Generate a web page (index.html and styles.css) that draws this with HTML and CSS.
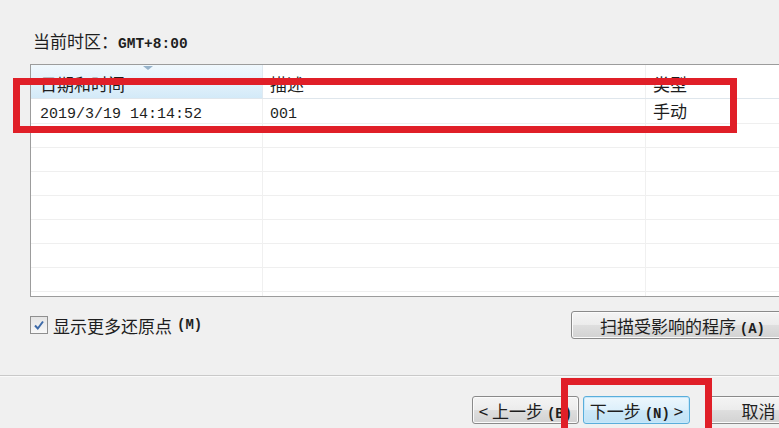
FILE: index.html
```html
<!DOCTYPE html>
<html lang="zh-CN">
<head>
    <meta charset="UTF-8">
    <meta name="viewport" content="width=device-width, initial-scale=1.0">
    <title>系统还原</title>
    <link rel="stylesheet" href="styles.css">
</head>
<body>
    <div class="dialog">
        <div class="content">
            <p class="tz">当前时区：<span class="mono-b">GMT+8:00</span></p>
            <div class="list">
                <div class="row head">
                    <div class="cell sorted"><span class="arrow"></span>日期和时间</div>
                    <div class="cell">描述</div>
                    <div class="cell">类型</div>
                </div>
                <div class="row">
                    <div class="cell first"><span class="mono">2019/3/19 14:14:52</span></div>
                    <div class="cell"><span class="mono">001</span></div>
                    <div class="cell">手动</div>
                </div>
                <div class="row"><div class="cell"></div><div class="cell"></div><div class="cell"></div></div>
                <div class="row"><div class="cell"></div><div class="cell"></div><div class="cell"></div></div>
                <div class="row"><div class="cell"></div><div class="cell"></div><div class="cell"></div></div>
                <div class="row"><div class="cell"></div><div class="cell"></div><div class="cell"></div></div>
                <div class="row"><div class="cell"></div><div class="cell"></div><div class="cell"></div></div>
                <div class="row"><div class="cell"></div><div class="cell"></div><div class="cell"></div></div>
                <div class="row"><div class="cell"></div><div class="cell"></div><div class="cell"></div></div>
                <div class="row"><div class="cell"></div><div class="cell"></div><div class="cell"></div></div>
            </div>
            <div class="check-row">
                <label class="check">
                    <span class="box">
                        <svg viewBox="0 0 12 12" width="12" height="12"><path d="M2 6.5 L4.8 9.5 L10 2.5" fill="none" stroke="#3d6aa8" stroke-width="2"/></svg>
                    </span>
                    显示更多还原点 <span class="key">(M)</span>
                </label>
                <button class="btn scan">扫描受影响的程序 <span class="key">(A)</span></button>
            </div>
        </div>
        <div class="sep"></div>
        <div class="buttons">
            <button class="btn">&lt; 上一步 <span class="key">(B)</span></button>
            <button class="btn default">下一步 <span class="key">(N)</span> &gt;</button>
            <button class="btn cancel">取消</button>
        </div>
    </div>

    <!-- red annotations -->
    <div class="mark mark-row"></div>
    <div class="mark mark-next"></div>
</body>
</html>
```

FILE: styles.css
```css
body{
    margin: 0;
    background-color: #f0f0f0;
    font-family: "Noto Sans CJK SC", "Noto Sans", sans-serif;
    font-size: 17px;
    color: #1e1e1e;
    overflow: hidden;
    height: 428px;
}
.dialog{
    width: 860px;
}
.content{
    padding: 0 30px;
}
.tz{
    margin: 0;
    padding: 31px 0 0 3px;
    height: 20px;
    line-height: 20px;
}
.mono{
    font-family: "Liberation Mono", monospace;
    font-size: 15px;
}
.mono-b{
    font-family: "Liberation Mono", monospace;
    font-size: 14.5px;
    font-weight: bold;
}
.key{
    font-family: "Liberation Mono", monospace;
    font-size: 14px;
    font-weight: bold;
}
.list{
    margin-top: 13px;
    height: 231px;
    overflow: hidden;
    background-color: #fff;
    border: 1px solid #9c9c9c;
}
.row{
    display: grid;
    grid-template-columns: 232px 383px 1fr;
    height: 24px;
    border-bottom: 1px solid #efefef;
    box-sizing: border-box;
}
.row.head{
    height: 34px;
    border-bottom: 1px solid #dfe6ec;
}
.row.head + .row{
    height: 25px;
}
.cell{
    border-right: 1px solid #f0f0f0;
    padding: 0 7px;
    height: 24px;
    line-height: 24px;
}
.cell:last-child{
    border-right: none;
}
.head .cell{
    height: auto;
    padding-top: 8px;
    line-height: 22px;
}
.head .cell.sorted{
    display: flex;
    flex-direction: column;
    padding-top: 1px;
    padding-left: 9px;
    background: linear-gradient(#f0f8fd, #e2f1fb 55%, #d3eaf8);
    border-right-color: #dfe9f1;
}
.arrow{
    align-self: center;
    width: 0;
    height: 0;
    border-left: 5px solid transparent;
    border-right: 5px solid transparent;
    border-top: 4px solid #97b3ca;
    margin-bottom: 3px;
}
.cell.first{
    padding-left: 9px;
}
.check-row{
    display: flex;
    align-items: center;
    margin-top: 14px;
    height: 28px;
}
.check{
    display: flex;
    align-items: center;
    gap: 5px;
}
.box{
    width: 16px;
    height: 16px;
    border: 1px solid #8f8f8f;
    background: linear-gradient(#e4e4e4, #f8f8f8);
    display: flex;
    align-items: center;
    justify-content: center;
}
.btn{
    font-family: "Noto Sans CJK SC", "Noto Sans", sans-serif;
    font-size: 17px;
    color: #1e1e1e;
    height: 28px;
    padding: 0;
    border: 1px solid #8a8a8a;
    border-radius: 3px;
    background: linear-gradient(#f4f4f4, #ececec 48%, #dedede 52%, #d2d2d2);
    box-shadow: inset 0 0 0 1px #fbfbfb;
}
.scan{
    margin-left: auto;
    width: 259px;
    text-align: left;
    padding-left: 28px;
}
.sep{
    margin-top: 36px;
    border-top: 1px solid #c9c9c9;
    border-bottom: 1px solid #fafafa;
}
.buttons{
    display: flex;
    margin-top: 19px;
    padding-left: 472px;
    gap: 4px;
}
.buttons .btn{
    width: 107px;
}
.btn.default{
    border-color: #5aaedb;
    background: linear-gradient(#edf7fd, #ddf0fb 48%, #cce8f8 52%, #c0e2f6);
    box-shadow: inset 0 0 0 1px #c6e8fb;
}
.btn.cancel{
    margin-left: 11px;
}
.mark{
    position: absolute;
    border: 7px solid #e01f28;
    box-sizing: border-box;
}
.mark-row{
    left: 13px;
    top: 78px;
    width: 724px;
    height: 55px;
}
.mark-next{
    left: 561px;
    top: 378px;
    width: 151px;
    height: 70px;
}
```
